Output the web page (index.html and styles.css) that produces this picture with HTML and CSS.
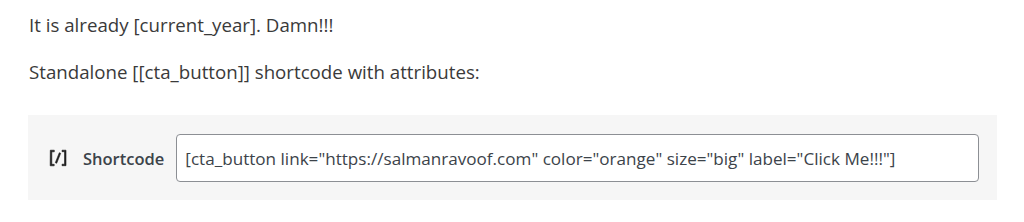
FILE: index.html
```html
<!DOCTYPE html>
<html>
<head>
<meta charset="utf-8">
<link rel="stylesheet" href="styles.css">
</head>
<body>
<div class="editor">
  <p class="para">It is already [current_year]. Damn!!!</p>
  <p class="para">Standalone [[cta_button]] shortcode with attributes:</p>
  <div class="shortcode">
    <div class="label">
      <svg class="icon" width="24" height="24" viewBox="0 0 24 24" aria-hidden="true"><path d="M16 4.2v1.5h2.5v12.5H16v1.5h4V4.2h-4zM4.2 19.8h4v-1.5H5.8V5.8h2.5V4.2h-4l-.1 15.6zm5.1-3.1l1.4.6 4-10-1.4-.6-4 10z"/></svg>
      <span class="label-text">Shortcode</span>
    </div>
    <div class="input">[cta_button link="https://salmanravoof.com" color="orange" size="big" label="Click Me!!!"]</div>
  </div>
</div>
</body>
</html>
```
FILE: styles.css
```css
html, body {
  margin: 0;
  padding: 0;
  background: #ffffff;
}
.editor {
  padding: 11px 27px 0 28px;
  font-family: "Open Sans", "Noto Sans", sans-serif;
  color: #3a3a3a;
}
.para {
  margin: 0 0 19px 1px;
  font-size: 18.7px;
  line-height: 28px;
}
.shortcode {
  margin-top: 29px;
  background: #f6f6f6;
  display: flex;
  align-items: center;
  padding: 19px 18px 18px 18px;
}
.label {
  display: flex;
  align-items: center;
  gap: 13px;
  margin-right: 12px;
}
.icon {
  display: block;
  fill: #1e1e1e;
  stroke: #1e1e1e;
  stroke-width: 0.6;
  stroke-linejoin: miter;
}
.label-text {
  font-weight: 600;
  font-size: 16.5px;
  color: #3c434a;
}
.input {
  flex: 1;
  box-sizing: border-box;
  height: 48px;
  border: 1px solid #8c8f94;
  border-radius: 4px;
  background: #fff;
  padding: 0 8px;
  display: flex;
  align-items: center;
  font-size: 17.1px;
  color: #3c434a;
  white-space: nowrap;
}
```
